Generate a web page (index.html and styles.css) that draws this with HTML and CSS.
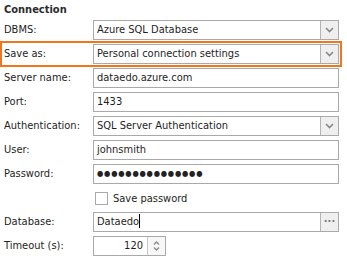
FILE: index.html
```html
<!DOCTYPE html>
<html>
<head>
<meta charset="utf-8">
<link rel="stylesheet" href="styles.css">
</head>
<body>
<div class="form">
  <div class="header">Connection</div>
  <div class="row">
    <label class="lbl">DBMS:</label>
    <div class="field combo"><span class="val">Azure SQL Database</span><span class="btn"><svg width="9" height="6" viewBox="0 0 9 6"><path d="M1 1 L4.5 4.5 L8 1" fill="none" stroke="#8a8a8a" stroke-width="1.6"/></svg></span></div>
  </div>
  <div class="row hl">
    <label class="lbl">Save as:</label>
    <div class="field combo"><span class="val">Personal connection settings</span><span class="btn"><svg width="9" height="6" viewBox="0 0 9 6"><path d="M1 1 L4.5 4.5 L8 1" fill="none" stroke="#8a8a8a" stroke-width="1.6"/></svg></span></div>
  </div>
  <div class="row">
    <label class="lbl">Server name:</label>
    <div class="field"><span class="val">dataedo.azure.com</span></div>
  </div>
  <div class="row">
    <label class="lbl">Port:</label>
    <div class="field"><span class="val">1433</span></div>
  </div>
  <div class="row">
    <label class="lbl">Authentication:</label>
    <div class="field combo"><span class="val">SQL Server Authentication</span><span class="btn"><svg width="9" height="6" viewBox="0 0 9 6"><path d="M1 1 L4.5 4.5 L8 1" fill="none" stroke="#8a8a8a" stroke-width="1.6"/></svg></span></div>
  </div>
  <div class="row">
    <label class="lbl">User:</label>
    <div class="field"><span class="val">johnsmith</span></div>
  </div>
  <div class="row">
    <label class="lbl">Password:</label>
    <div class="field"><span class="val dots">●●●●●●●●●●●●●●●</span></div>
  </div>
  <div class="row">
    <span class="lbl"></span>
    <div class="check"><span class="box"></span><span>Save password</span></div>
  </div>
  <div class="row">
    <label class="lbl">Database:</label>
    <div class="field combo"><span class="val">Dataedo<span class="caret"></span></span><span class="btn ell">···</span></div>
  </div>
  <div class="row">
    <label class="lbl">Timeout (s):</label>
    <div class="field spin"><span class="val num">120</span><span class="spinbtn"><svg width="9" height="14" viewBox="0 0 9 14"><path d="M2 5.5 L4.5 3 L7 5.5" fill="none" stroke="#8a8a8a" stroke-width="1.3"/><path d="M2 8.5 L4.5 11 L7 8.5" fill="none" stroke="#8a8a8a" stroke-width="1.3"/></svg></span></div>
  </div>
</div>
</body>
</html>
```
FILE: styles.css
```css
html, body {
  margin: 0;
  padding: 0;
  background: #ffffff;
}
body {
  font-family: "DejaVu Sans Condensed", "DejaVu Sans", sans-serif;
  font-stretch: condensed;
  font-size: 11px;
  color: #1e1e1e;
}
.form {
  display: flex;
  flex-direction: column;
  gap: 4px;
  padding: 0 8px 0 3px;
  width: 336px;
}
.header {
  height: 16px;
  line-height: 20px;
  font-weight: bold;
  color: #2b2b2b;
  padding-left: 1px;
}
.row {
  display: grid;
  grid-template-columns: 90px 246px;
  height: 20px;
  align-items: center;
}
.row.hl {
  outline: 2px solid #f0761e;
  outline-offset: 1px;
}
.lbl {
  padding-left: 1px;
  line-height: 20px;
}
.field {
  box-sizing: border-box;
  height: 20px;
  border: 1px solid #a9a9a9;
  background: #fff;
  display: flex;
  align-items: stretch;
}
.val {
  flex: 1;
  padding-left: 3px;
  line-height: 18px;
  white-space: nowrap;
  overflow: hidden;
}
.dots {
  font-size: 8px;
  letter-spacing: 0.8px;
  color: #222;
  line-height: 18px;
}
.btn {
  width: 17px;
  border-left: 1px solid #b4b4b4;
  background: #efefef;
  display: flex;
  align-items: center;
  justify-content: center;
}
.ell {
  color: #777;
  font-weight: bold;
  font-size: 11px;
  letter-spacing: 0;
  line-height: 18px;
}
.caret {
  display: inline-block;
  width: 1px;
  height: 14px;
  background: #000;
  vertical-align: -3px;
}
.check {
  display: flex;
  align-items: center;
  gap: 5px;
  padding-left: 2px;
}
.box {
  box-sizing: border-box;
  width: 13px;
  height: 13px;
  border: 1px solid #a9a9a9;
  background: #fff;
}
.spin {
  width: 73px;
}
.num {
  text-align: right;
  padding-right: 4px;
}
.spinbtn {
  width: 17px;
  border-left: 1px solid #c8c8c8;
  background: #f7f7f7;
  display: flex;
  align-items: center;
  justify-content: center;
}
```
